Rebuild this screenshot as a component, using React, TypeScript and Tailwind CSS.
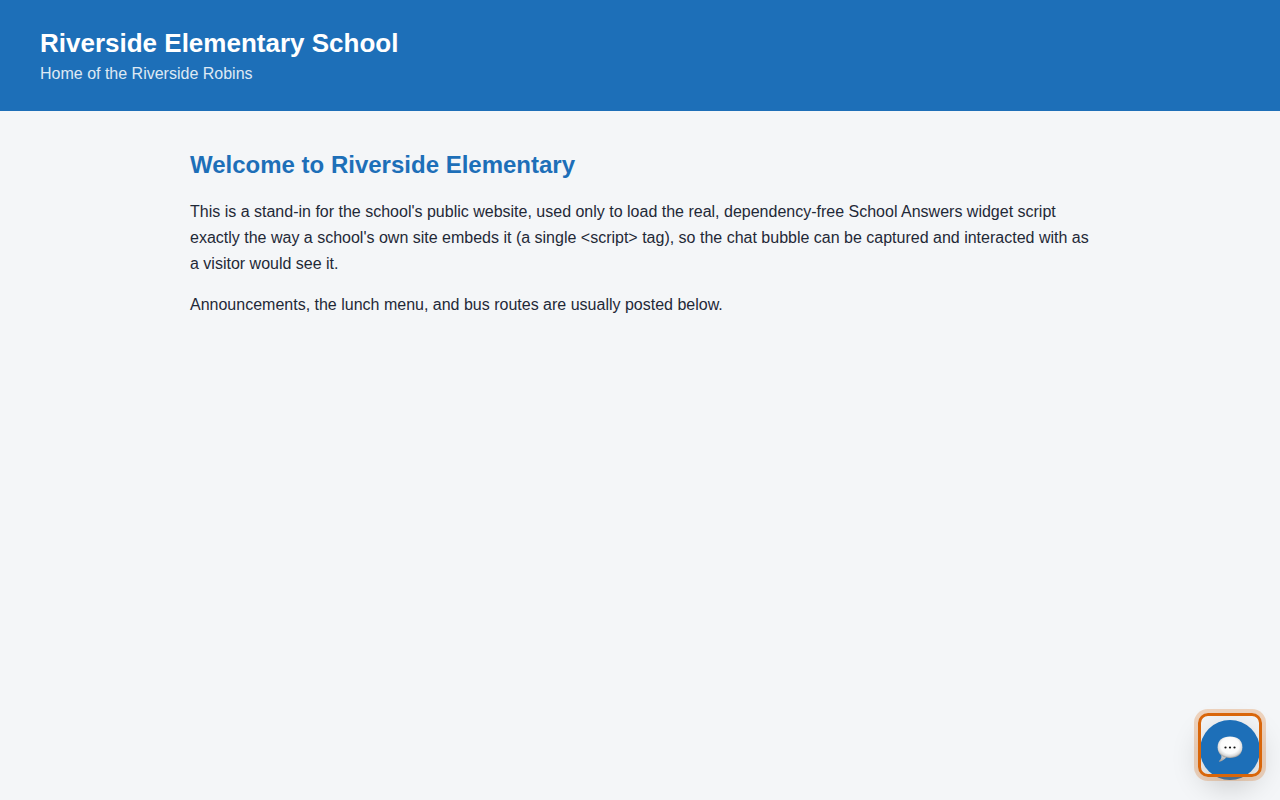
function ChatBubbleIcon() {
  return (
    <svg width="28" height="28" viewBox="0 0 28 28" aria-hidden="true">
      <defs>
        <radialGradient id="bubble" cx="50%" cy="42%" r="60%">
          <stop offset="0%" stopColor="#ffffff" />
          <stop offset="62%" stopColor="#fbfbfb" />
          <stop offset="84%" stopColor="#d8d8d8" />
          <stop offset="100%" stopColor="#8f8f8f" />
        </radialGradient>
        <linearGradient id="tail" x1="0" y1="0" x2="0" y2="1">
          <stop offset="0%" stopColor="#e6e6e6" />
          <stop offset="100%" stopColor="#9a9a9a" />
        </linearGradient>
      </defs>
      <path d="M5.2 18.5C6.1 21.8 4.6 23.7 3 25C2.7 25.6 3.1 25.9 3.7 25.7C6.8 24.9 9 23.3 10.6 20.8Z" fill="url(#tail)" />
      <path
        d="M14 0.5C21.4 0.5 26.4 4.2 26.4 11.2C26.4 18.2 21.4 21.9 14 21.9C6.6 21.9 1.6 18.2 1.6 11.2C1.6 4.2 6.6 0.5 14 0.5Z"
        fill="url(#bubble)"
      />
      <circle cx="9.5" cy="11.5" r="1.1" fill="#111111" />
      <circle cx="14" cy="11.5" r="1.1" fill="#111111" />
      <circle cx="18.5" cy="11.5" r="1.1" fill="#111111" />
    </svg>
  );
}

function ChatWidget() {
  return (
    <div className="fixed bottom-5 right-5">
      <button
        type="button"
        aria-label="Open chat"
        className="flex h-[60px] w-[60px] cursor-pointer items-center justify-center rounded-full bg-[#1d6fb8] shadow-[0_8px_30px_rgba(0,0,0,0.18)]"
      >
        <ChatBubbleIcon />
      </button>

      {/* Highlight frame over the launcher */}
      <div className="pointer-events-none absolute -left-0.5 -top-[7px] h-16 w-16 rounded-[10px] border-3 border-[#d9660a] shadow-[0_0_0_4px_rgba(217,102,10,0.25)]" />
    </div>
  );
}

export default function App() {
  return (
    <div className="min-h-screen bg-[#f4f6f8] font-['Liberation_Sans',Arial,sans-serif] text-[#1f2937]">
      <header className="bg-[#1d6fb8] px-10 pt-7 pb-[26px] text-white">
        <h1 className="text-[26px] font-bold leading-[30px]">Riverside Elementary School</h1>
        <p className="mt-1 text-base leading-[23px] opacity-85">Home of the Riverside Robins</p>
      </header>

      <main className="mx-auto max-w-[948px] px-6 py-10">
        <h2 className="mb-5 text-2xl font-bold leading-7 text-[#1d6fb8]">Welcome to Riverside Elementary</h2>
        <div className="space-y-[15px] text-base leading-[26px]">
          <p>
            This is a stand-in for the school's public website, used only to load the real, dependency-free School
            Answers widget script exactly the way a school's own site embeds it (a single &lt;script&gt; tag), so the
            chat bubble can be captured and interacted with as a visitor would see it.
          </p>
          <p>Announcements, the lunch menu, and bus routes are usually posted below.</p>
        </div>
      </main>

      <ChatWidget />
    </div>
  );
}
